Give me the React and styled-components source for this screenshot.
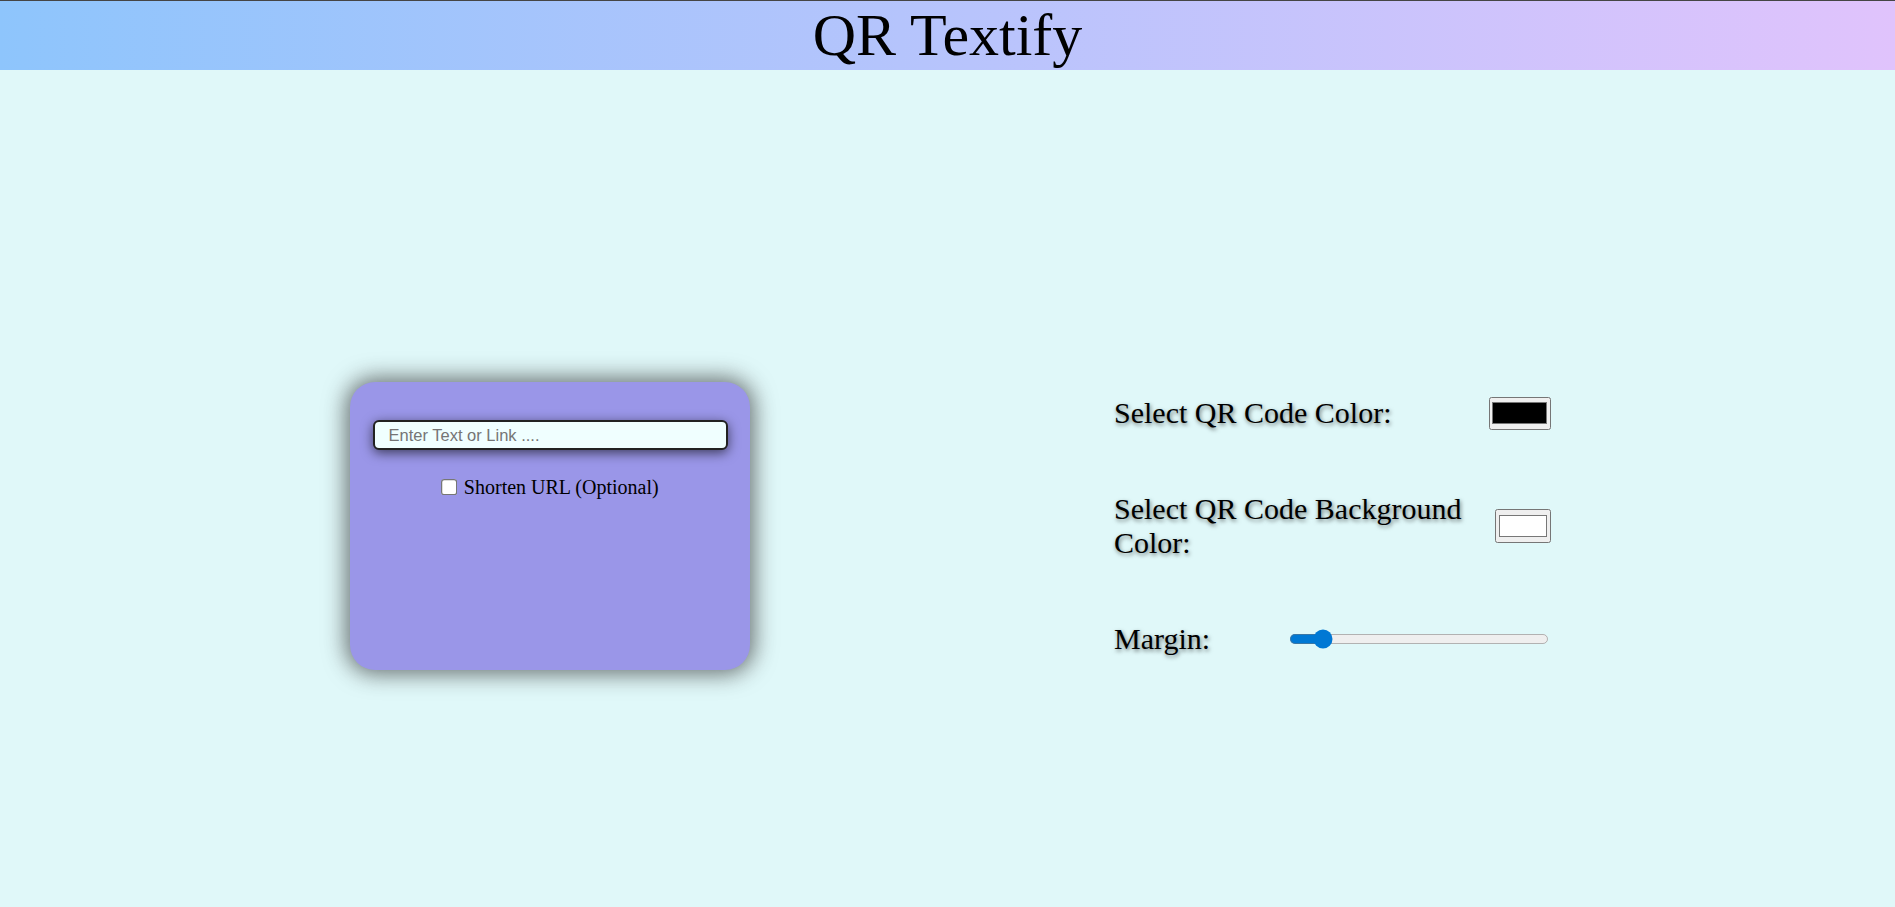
import React, { useState } from "react";
import styled, { createGlobalStyle } from "styled-components";

const GlobalStyle = createGlobalStyle`
  * { box-sizing: border-box; }
  html, body { margin: 0; padding: 0; }
  body {
    background: #e0f8f9;
    font-family: "Liberation Serif", "Times New Roman", serif;
    color: #000;
  }
`;

const Header = styled.header`
  height: 70px;
  border-top: 1px solid #454545;
  background: linear-gradient(90deg, #8ec5fc 0%, #e0c3fc 100%);
  display: flex;
  justify-content: center;
  align-items: flex-start;
`;

const Title = styled.h1`
  margin: 0;
  font-family: "Liberation Serif", "Times New Roman", serif;
  font-weight: 400;
  font-size: 60px;
  line-height: 68px;
`;

const Main = styled.main`
  min-height: calc(100vh - 70px);
  padding: 75px 344px 0 350px;
  display: flex;
  align-items: center;
  justify-content: space-between;
`;

const Card = styled.section`
  width: 400px;
  height: 288px;
  background: #9a96e8;
  border-radius: 25px;
  box-shadow: 0 0 22px 4px rgba(40, 40, 40, 0.65);
  padding-top: 38px;
  display: flex;
  flex-direction: column;
  align-items: center;
  gap: 26px;
`;

const TextInput = styled.input`
  width: 355px;
  height: 30px;
  border: 2px solid #222;
  border-radius: 6px;
  background: #f0ffff;
  padding: 0 0 0 14px;
  font-family: "Liberation Sans", Arial, sans-serif;
  font-size: 16.5px;
  color: #111;
  box-shadow: 0 3px 12px rgba(0, 0, 0, 0.6);
  outline: none;
  &::placeholder { color: #757575; }
`;

const CheckRow = styled.label`
  display: flex;
  align-items: center;
  font-size: 20px;
  line-height: 23px;
`;

const Check = styled.input`
  zoom: 1.25;
  margin: 0 5px 0 0;
`;

const Settings = styled.section`
  width: 437px;
  display: flex;
  flex-direction: column;
  gap: 61px;
`;

const Row = styled.div`
  display: flex;
  justify-content: space-between;
  align-items: center;
`;

const Label = styled.label`
  font-size: 30px;
  line-height: 34.5px;
  text-shadow: 1px 2px 4px rgba(0, 0, 0, 0.55);
`;

const ColorInput = styled.input`
  zoom: 1.25;
  margin: 0;
  width: 50px;
  height: 26.5px;
  padding: 0 1px;
  border: 1px solid #767676;
  border-radius: 2px;
  background: #efefef;
  flex-shrink: 1;
  min-width: 0;
  cursor: pointer;
  &::-webkit-color-swatch-wrapper { padding: 3.8px 1.2px; }
  &::-webkit-color-swatch { border: 1px solid #777; border-radius: 0; }
`;

const Range = styled.input`
  zoom: 1.25;
  width: 208px;
  accent-color: #0078d4;
`;

export default function App() {
  const [text, setText] = useState("");
  const [shorten, setShorten] = useState(false);
  const [fg, setFg] = useState("#000000");
  const [bg, setBg] = useState("#ffffff");
  const [margin, setMargin] = useState(1);

  return (
    <>
      <GlobalStyle />
      <Header>
        <Title>QR Textify</Title>
      </Header>
      <Main>
        <Card>
          <TextInput
            type="text"
            placeholder="Enter Text or Link ...."
            value={text}
            onChange={(e) => setText(e.target.value)}
          />
          <CheckRow>
            <Check
              type="checkbox"
              checked={shorten}
              onChange={(e) => setShorten(e.target.checked)}
            />
            Shorten URL (Optional)
          </CheckRow>
        </Card>
        <Settings>
          <Row>
            <Label htmlFor="fg">Select QR Code Color:</Label>
            <ColorInput id="fg" type="color" value={fg} onChange={(e) => setFg(e.target.value)} />
          </Row>
          <Row>
            <Label htmlFor="bg">Select QR Code Background Color:</Label>
            <ColorInput id="bg" type="color" value={bg} onChange={(e) => setBg(e.target.value)} />
          </Row>
          <Row>
            <Label htmlFor="margin">Margin:</Label>
            <Range
              id="margin"
              type="range"
              min="0"
              max="10"
              value={margin}
              onChange={(e) => setMargin(Number(e.target.value))}
            />
          </Row>
        </Settings>
      </Main>
    </>
  );
}
